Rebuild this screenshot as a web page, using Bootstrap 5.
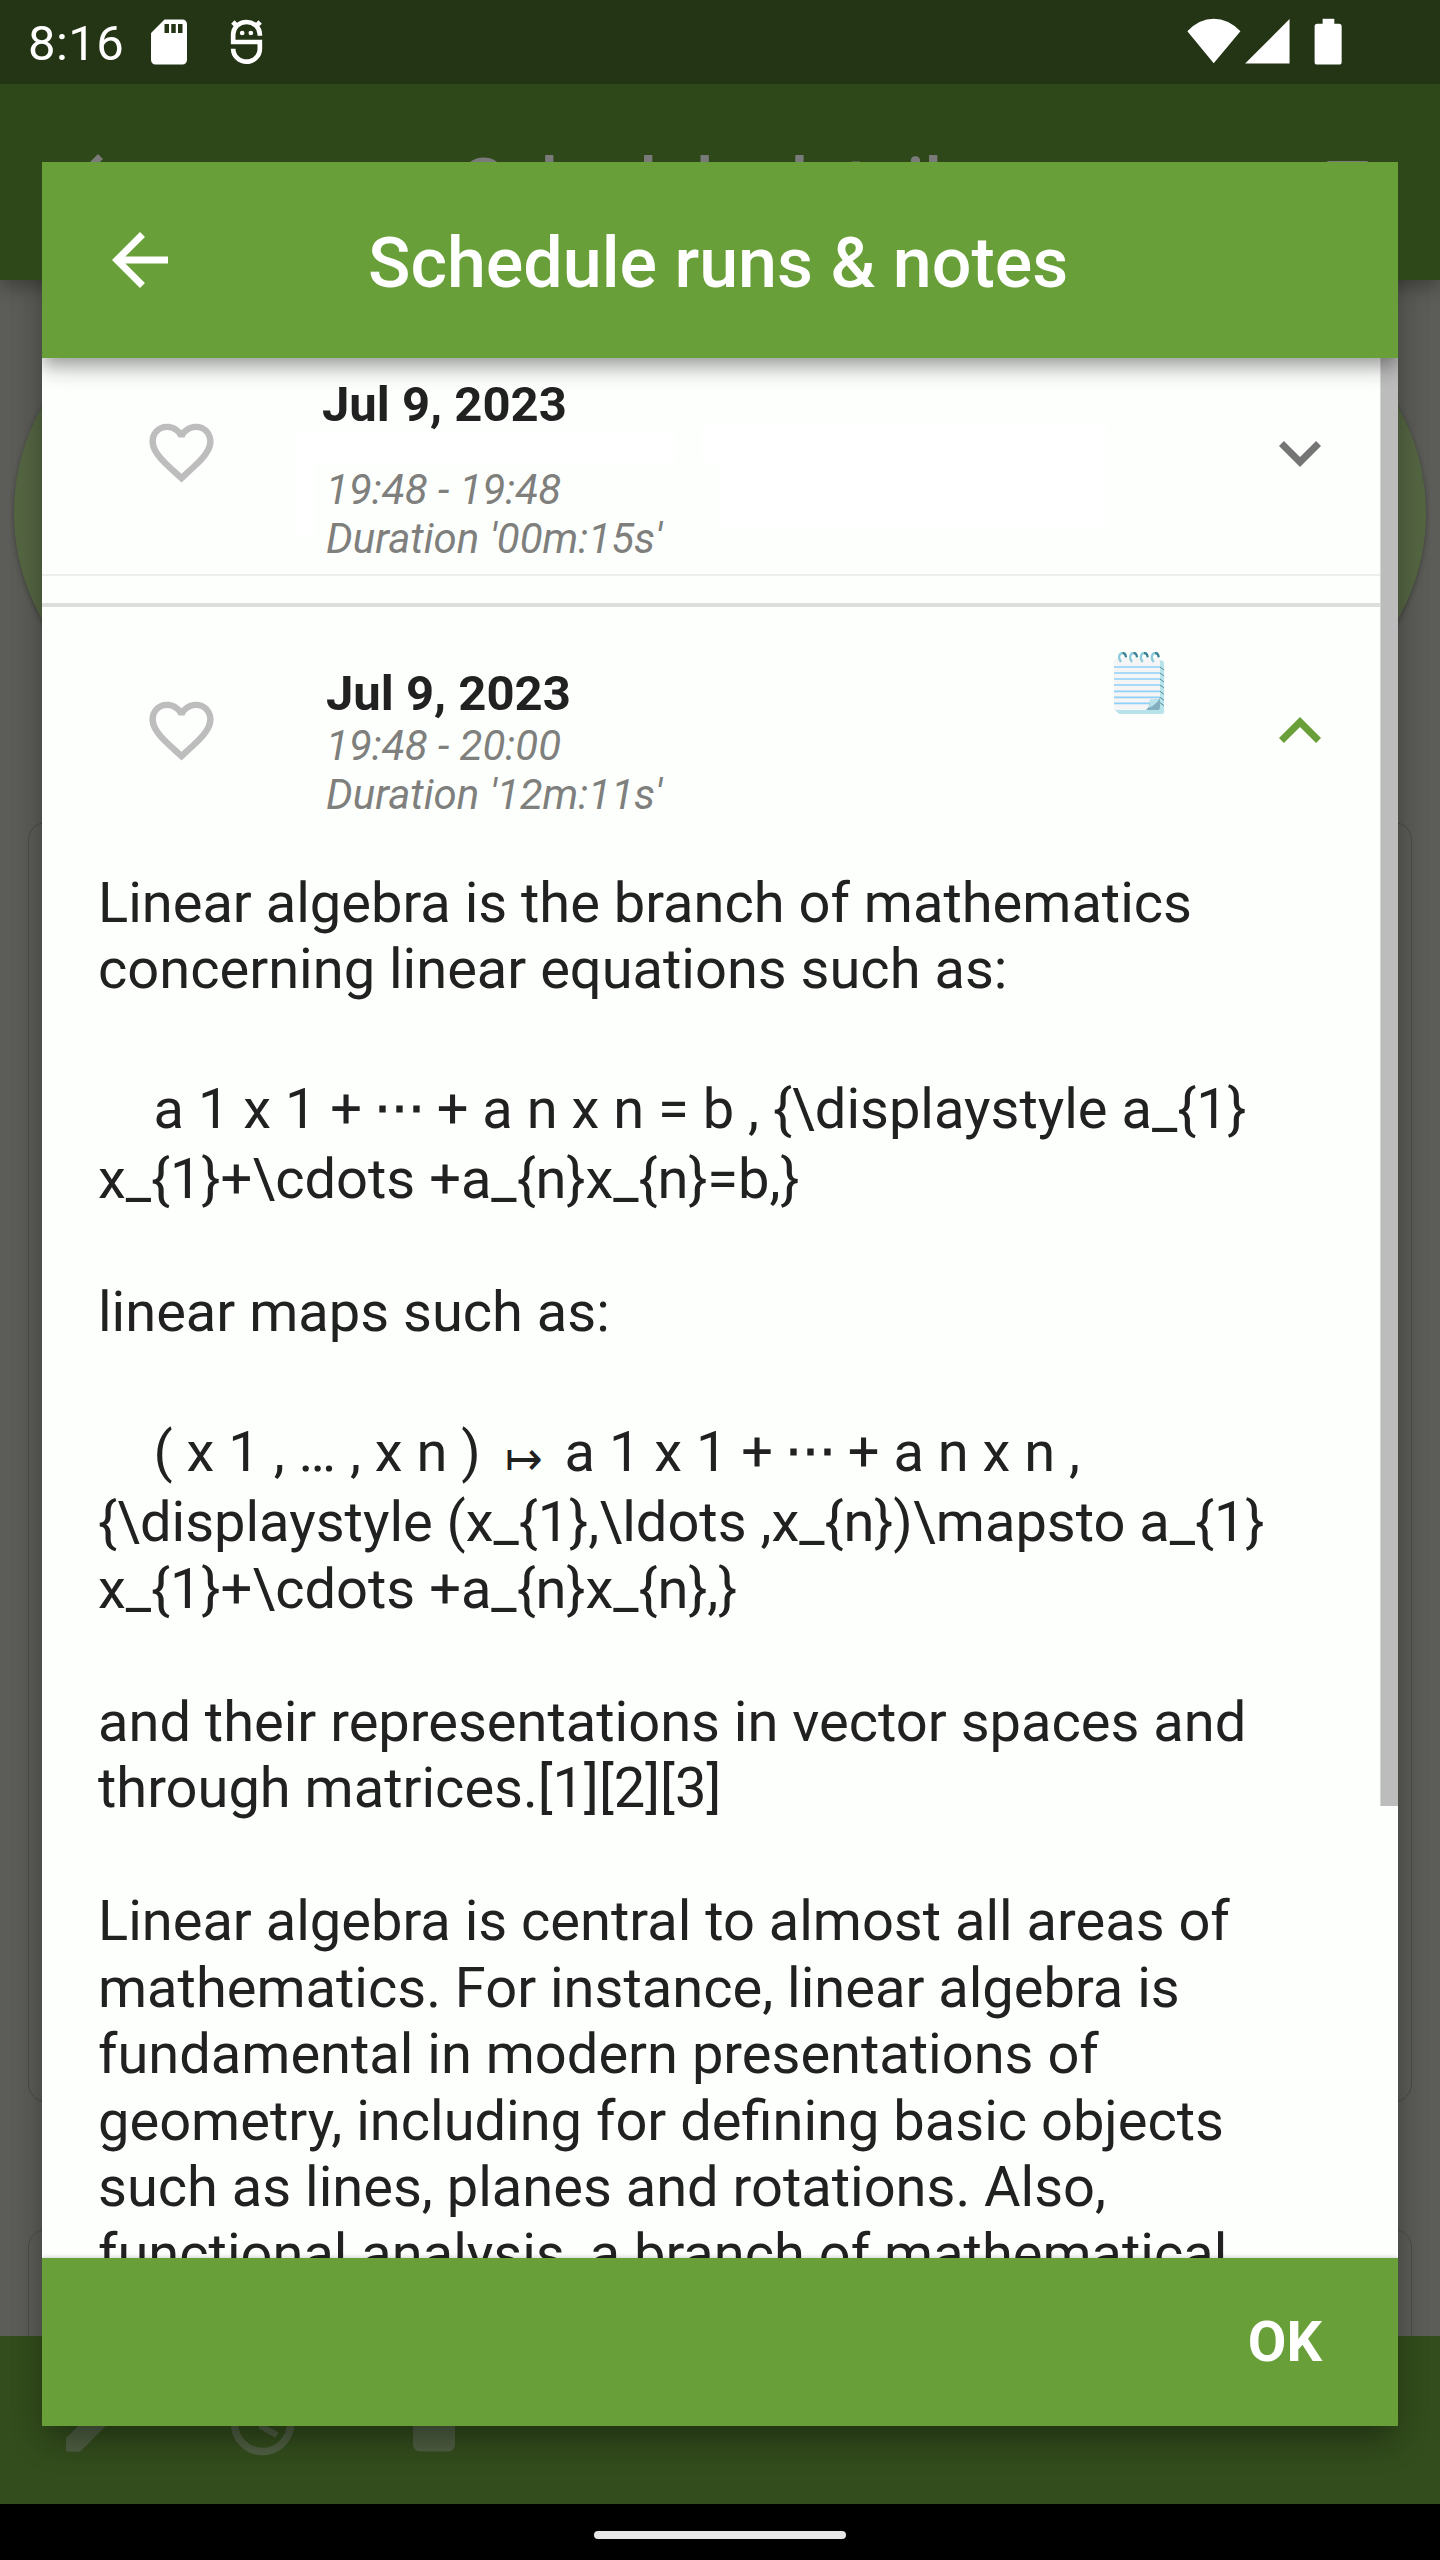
<!DOCTYPE html>
<html lang="en">
<head>
<meta charset="utf-8">
<meta name="viewport" content="width=device-width, initial-scale=1">
<title>Schedule runs &amp; notes</title>
<link href="https://cdn.jsdelivr.net/npm/bootstrap@5.3.0/dist/css/bootstrap.min.css" rel="stylesheet">
<style>
body{font-family:Roboto,"Noto Sans",sans-serif;background:#000;color:#212121}
svg{display:block;flex:none}
.screen{width:1440px;height:2560px}
.statusbar,.pagebar,.toolbar2,.navarea,.dlghead,.dlgfoot{flex:none}
.statusbar{height:84px;background:#233514;padding:0 97px 0 28px;color:#fff;z-index:2}
.clock{font-size:49px;line-height:88px;letter-spacing:.4px;width:114px}
.sd-ic{margin-top:15px}
.app-ic{margin:19px auto 0 34px}
.sys-ic{margin-top:18px}
.pagebar{height:196px;background:#2f4819;color:#7a7a7a;padding:42px 58px 0 56px;box-shadow:0 8px 16px rgba(0,0,0,.28);z-index:1}
.back-ic{margin-top:14px}
.bartitle{font-size:70px;line-height:84px;font-weight:500;white-space:nowrap}
.pagebar .bartitle{margin:16px 0 0 322px}
.pagebody{background:#5c5d58}
.disc{width:1412px;height:430px;margin:18px auto 0;border-radius:215px;background:#556643;box-shadow:0 2px 5px rgba(0,0,0,.3)}
.panel{width:1384px;margin:94px auto 0;height:1280px;border:1px solid #484d42;border-radius:18px}
.panel+.panel{margin-top:127px;height:200px}
.toolbar2{height:168px;background:#334d1d;padding-left:52px;color:#4f5f43}
.navarea{height:56px;background:#000;padding-top:6px}
.pill{width:252px;height:8px;background:#e8e8e8}
.dlg{left:42px;top:162px;width:1356px;height:2264px;background:#fdfffc;box-shadow:0 17px 30px -4px rgba(0,0,0,.34),0 6px 40px rgba(0,0,0,.06)}
.dlghead{height:196px;background:#689f38;color:#fff;padding-left:56px;z-index:2;box-shadow:0 7px 14px -3px rgba(0,0,0,.22),0 14px 17px rgba(0,0,0,.14),0 3px 30px rgba(0,0,0,.12)}
.dlghead .bartitle{margin-left:186px;padding-top:6px}
.dlgfoot{height:168px;background:#689f38;padding-right:76px;z-index:2;box-shadow:0 0 5px rgba(0,0,0,.25)}
.okbtn{color:#fff;font-size:56px;font-weight:700;line-height:66px}
.track{width:1338px}
.thumb{width:18px;height:1448px;background:#bcbcbc;border-left:1px solid #d4d4d4}
.run{padding-left:101px;padding-right:38px}
.run-a{height:218px;border-bottom:2px solid #eceeeb}
.run-b{height:262.5px}
.gap-line{height:31px;border-bottom:4px solid #dcdedb}
.when{font-size:49px;line-height:55px;font-weight:700}
.sub{font-size:42px;line-height:49px;font-style:italic;color:#7f7f7d}
.blank{left:254px;top:67px}
.pad-a{padding-top:19px;margin-left:102px}
.pad-b{padding-top:60px;margin-left:106px}
.pad-b .when{line-height:54px}
.run-a .sub-first{margin-top:33px}
.fav-a{margin-top:56px}.fav-b{margin-top:85px}
.exp-a{margin-top:53px}.exp-b{margin-top:82px}
.note-ic{margin:45px 94px 0 auto}
.prose{font-size:56px;line-height:66.5px;padding-left:56px;white-space:pre}
.prose div{height:66.5px}
.prose .tall{height:77px;padding-top:7px}
.maps{display:inline-block;width:56px;text-align:center;font-family:"DejaVu Sans";font-weight:200;font-size:45px;line-height:40px;position:relative;top:3px;left:1px}
.dots{font-size:51px;line-height:40px;position:relative;top:-3px;margin:0 -2.1px;-webkit-text-stroke:1px #212121}
</style>
<script src="https://cdn.jsdelivr.net/npm/bootstrap@5.3.0/dist/js/bootstrap.bundle.min.js"></script>
</head>
<body>
<main class="screen position-relative overflow-hidden d-flex flex-column">
  <header class="statusbar d-flex align-items-start position-relative">
    <span class="clock">8:16</span>
    <svg class="sd-ic" width="54" height="54" viewBox="0 0 24 24" fill="#fff"><path d="M18 2h-8L4.02 8 4 20c0 1.100.9 2 2 2h12c1.100 0 2-.9 2-2V4c0-1.100-.9-2-2-2zm-6 6h-2V4h2v4zm3 0h-2V4h2v4zm3 0h-2V4h2v4z"/></svg>
    <svg class="app-ic" width="33" height="46" viewBox="690 58 98 138" fill="none" stroke="#fff" stroke-width="14"><path d="M779 108v-4a40 37 0 0 0-80 0v23h80v20a40 39 0 0 1-80 0M698 67l14 14M780 67l-14 14"/><g fill="#fff" stroke="none"><circle cx="726" cy="100" r="7"/><circle cx="752" cy="100" r="7"/></g></svg>
    <svg class="sys-ic" width="157" height="47" viewBox="260 55 470 140" fill="#fff"><path d="M343 190 264 94Q300 57 343 57T423 94ZM437 191 570 58V191Z"/><rect x="645" y="72" width="81" height="122" rx="8"/><path d="M669 57h35v18h-35z"/></svg>
  </header>
  <div class="pagebar d-flex align-items-start position-relative">
    <svg class="back-ic" width="84" height="84" viewBox="0 0 24 24" fill="currentColor"><path d="M20 11H7.830l5.590-5.590L12 4l-8 8 8 8 1.410-1.410L7.830 13H20v-2z"/></svg>
    <span class="bartitle">Schedule details</span>
    <svg class="ms-auto mt-3" width="56" height="84" viewBox="0 0 56 84" fill="currentColor"><rect y="19" x="0" width="43" height="60" rx="3"/></svg>
  </div>
  <div class="pagebody flex-grow-1 overflow-hidden">
    <div class="disc"></div>
    <div class="panel"></div>
    <div class="panel"></div>
  </div>
  <div class="toolbar2 d-flex align-items-start">
    <svg width="420" height="130" viewBox="52 2336 420 130" fill="currentColor"><path d="M66 2438l44-44 14 14-44 43.700H68q-2 0-2-2z"/><g fill="none" stroke="currentColor"><circle cx="262.500" cy="2423.500" r="28" stroke-width="7.500"/><path d="M262 2400v27l15 8" stroke-width="6"/></g><rect x="413" y="2390" width="42" height="61.500" rx="7"/></svg>
  </div>
  <div class="navarea d-flex align-items-center justify-content-center"><div class="pill rounded-pill"></div></div>

  <section class="dlg position-absolute" role="dialog">
    <div class="h-100 overflow-hidden d-flex flex-column">
      <div class="dlghead d-flex align-items-center position-relative">
        <svg width="84" height="84" viewBox="0 0 24 24" fill="#fff"><path d="M20 11H7.830l5.590-5.590L12 4l-8 8 8 8 1.410-1.410L7.830 13H20v-2z"/></svg>
        <span class="bartitle">Schedule runs &amp; notes</span>
      </div>
      <div class="flex-grow-1 overflow-hidden d-flex">
        <div class="track flex-shrink-0">
          <div class="run run-a d-flex align-items-start position-relative">
            <svg class="blank position-absolute" width="813" height="110" fill="#fff"><path d="M0 9h380v28H19v72H0zM406 0h406v103H424V37h-18z"/></svg>
            <svg class="fav-a" width="77" height="77" viewBox="0 0 24 24" fill="#bdbdbd"><path d="M16.500 3c-1.740 0-3.410.810-4.500 2.090C10.910 3.810 9.240 3 7.500 3 4.420 3 2 5.420 2 8.500c0 3.780 3.400 6.860 8.550 11.540L12 21.350l1.450-1.320C18.600 15.360 22 12.280 22 8.500 22 5.420 19.580 3 16.500 3zm-4.400 15.550l-.1.100-.1-.1C7.140 14.240 4 11.390 4 8.500 4 6.500 5.500 5 7.500 5c1.540 0 3.040.990 3.570 2.360h1.870C13.460 5.990 14.960 5 16.500 5c2 0 3.500 1.500 3.500 3.500 0 2.890-3.140 5.740-7.900 10.050z"/></svg>
            <div class="pad-a position-relative">
              <div class="when">Jul 9, 2023</div>
              <div class="sub sub-first ms-1">19:48 - 19:48</div>
              <div class="sub ms-1">Duration '00m:15s'</div>
            </div>
            <svg class="exp-a ms-auto" width="84" height="84" viewBox="0 0 24 24" fill="#757575"><path d="M16.590 8.590L12 13.170 7.410 8.590 6 10l6 6 6-6z"/></svg>
          </div>
          <div class="gap-line"></div>
          <div class="run run-b d-flex align-items-start">
            <svg class="fav-b" width="77" height="77" viewBox="0 0 24 24" fill="#bdbdbd"><path d="M16.500 3c-1.740 0-3.410.810-4.500 2.090C10.910 3.810 9.240 3 7.500 3 4.420 3 2 5.420 2 8.500c0 3.780 3.400 6.860 8.550 11.540L12 21.350l1.450-1.320C18.600 15.360 22 12.280 22 8.500 22 5.420 19.580 3 16.500 3zm-4.400 15.550l-.1.100-.1-.1C7.140 14.240 4 11.390 4 8.500 4 6.500 5.500 5 7.500 5c1.540 0 3.040.990 3.570 2.360h1.870C13.460 5.990 14.960 5 16.500 5c2 0 3.500 1.500 3.500 3.500 0 2.890-3.140 5.740-7.900 10.050z"/></svg>
            <div class="pad-b">
              <div class="when">Jul 9, 2023</div>
              <div class="sub">19:48 - 20:00</div>
              <div class="sub">Duration '12m:11s'</div>
            </div>
            <svg class="note-ic" width="50" height="62" viewBox="0 0 150 186">
              <path d="M10 25h130q10 0 10 10v145q0 6-6 6H16L2 173z" fill="#b8e3ea"/>
              <path d="M0 26q0-8 8-8h122q8 0 8 8v122l-30 26H10q-10 0-10-10z" fill="#f5f5f5"/>
              <path d="M0 45h138M0 63h138M0 81h138M0 99h138M0 118h138M0 136h138M0 154h108" stroke="#8fd0f8" stroke-width="5"/>
              <path d="M138 45l12 9M138 63l12 9M138 81l12 9M138 99l12 9M138 118l12 9M138 136l12 9M138 152l12 9" stroke="#52909f" stroke-width="3"/>
              <path d="M96 174q12-10 12-31 20 2 30-4v28q0 7-7 7z" fill="#82aec0"/><path d="M104 168q4-10 4-25 20 2 30-4-12 20-34 29z" fill="#b8e3ea"/>
              <g fill="none" stroke="#8bcbdb" stroke-width="7"><path d="M21 30C11 18 16 3 25 3M54 30C44 18 49 3 58 3M86 30C76 18 81 3 90 3M119 30C109 18 114 3 123 3"/><path d="M25 3q10 0 11 13M58 3q10 0 11 13M90 3q10 0 11 13M123 3q10 0 11 13" stroke="#3d8195"/></g>
            </svg>
            <svg class="exp-b" width="84" height="84" viewBox="0 0 24 24" fill="#689f38"><path d="M12 8l-6 6 1.410 1.410L12 10.830l4.590 4.580L18 14z"/></svg>
          </div>
          <div class="prose"><div>Linear algebra is the branch of mathematics</div><div>concerning linear equations such as:</div><div></div><div class="tall">    a 1 x 1 + <span class="dots">⋯</span> + a n x n = b , {\displaystyle a_{1}</div><div>x_{1}+\cdots +a_{n}x_{n}=b,}</div><div></div><div>linear maps such as:</div><div></div><div class="tall">    ( x 1 , … , x n ) <span class="maps">↦</span> a 1 x 1 + <span class="dots">⋯</span> + a n x n ,</div><div>{\displaystyle (x_{1},\ldots ,x_{n})\mapsto a_{1}</div><div>x_{1}+\cdots +a_{n}x_{n},}</div><div></div><div>and their representations in vector spaces and</div><div>through matrices.[1][2][3]</div><div></div><div>Linear algebra is central to almost all areas of</div><div>mathematics. For instance, linear algebra is</div><div>fundamental in modern presentations of</div><div>geometry, including for defining basic objects</div><div>such as lines, planes and rotations. Also,</div><div>functional analysis, a branch of mathematical</div></div>
        </div>
        <div class="thumb flex-shrink-0"></div>
      </div>
      <div class="dlgfoot d-flex align-items-center justify-content-end position-relative">
        <button class="okbtn btn border-0 p-0">OK</button>
      </div>
    </div>
  </section>
</main>
</body>
</html>
